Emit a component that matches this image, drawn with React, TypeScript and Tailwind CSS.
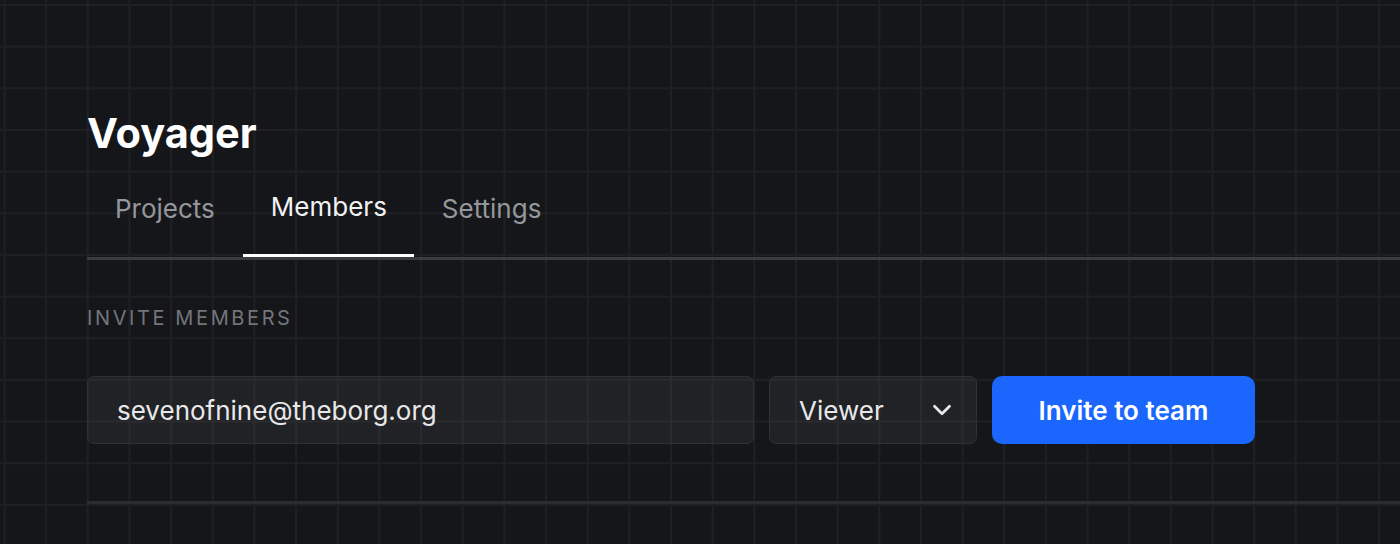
import { ChevronDown } from "lucide-react";

const tabs = ["Projects", "Members", "Settings"];

export default function App() {
  return (
    <div
      className="min-h-screen w-full bg-[#151619] bg-[linear-gradient(to_right,#1f2023_1.5px,transparent_1.5px),linear-gradient(to_bottom,#1f2023_1.5px,transparent_1.5px)] bg-[size:41.667px_41.667px] bg-[position:3.5px_4px] font-['Inter','Liberation_Sans',sans-serif] text-white"
    >
      <div className="pl-[87px] pt-[109px]">
        <h1 className="text-[41.5px] font-bold leading-[49px] text-white">
          Voyager
        </h1>

        {/* tabs */}
        <div className="flex border-b-[3px] border-[#3a3b3e]">
          {tabs.map((t) => {
            const active = t === "Members";
            return (
              <button
                key={t}
                className={
                  active
                    ? "border-b-[3px] border-white pl-[28px] pr-[27px] pt-[33px] pb-[31px] text-[26px] leading-[32px] text-[#f2f2f3]"
                    : "border-b-[3px] border-transparent px-[28px] pt-[35px] pb-[29px] text-[26px] leading-[32px] text-[#96979c]"
                }
              >
                {t}
              </button>
            );
          })}
        </div>

        <div className="mt-[46px] text-[20px] leading-[24px] tracking-[0.13em] text-[#74757b] uppercase">
          Invite members
        </div>

        {/* invite row */}
        <div className="mt-[46px] flex gap-[15px]">
          <div className="flex h-[68px] w-[667px] items-center rounded-[7px] border border-[#2f3033] bg-white/[0.05] px-[29px] text-[26px] text-[#e8e8ea]">
            sevenofnine@theborg.org
          </div>
          <div className="flex h-[68px] w-[208px] items-center justify-between rounded-[7px] border border-[#2f3033] bg-white/[0.05] pl-[29px] pr-[19px] text-[26px] text-[#e8e8ea]">
            <span>Viewer</span>
            <ChevronDown size={30} strokeWidth={2.2} className="text-[#e8e8ea]" />
          </div>
          <button className="h-[68px] w-[263px] rounded-[10px] bg-[#1b66fd] text-[26px] font-semibold text-white">
            Invite to team
          </button>
        </div>

        <div className="mt-[57px] border-b-[3px] border-[#2b2c2f]" />
      </div>
    </div>
  );
}
